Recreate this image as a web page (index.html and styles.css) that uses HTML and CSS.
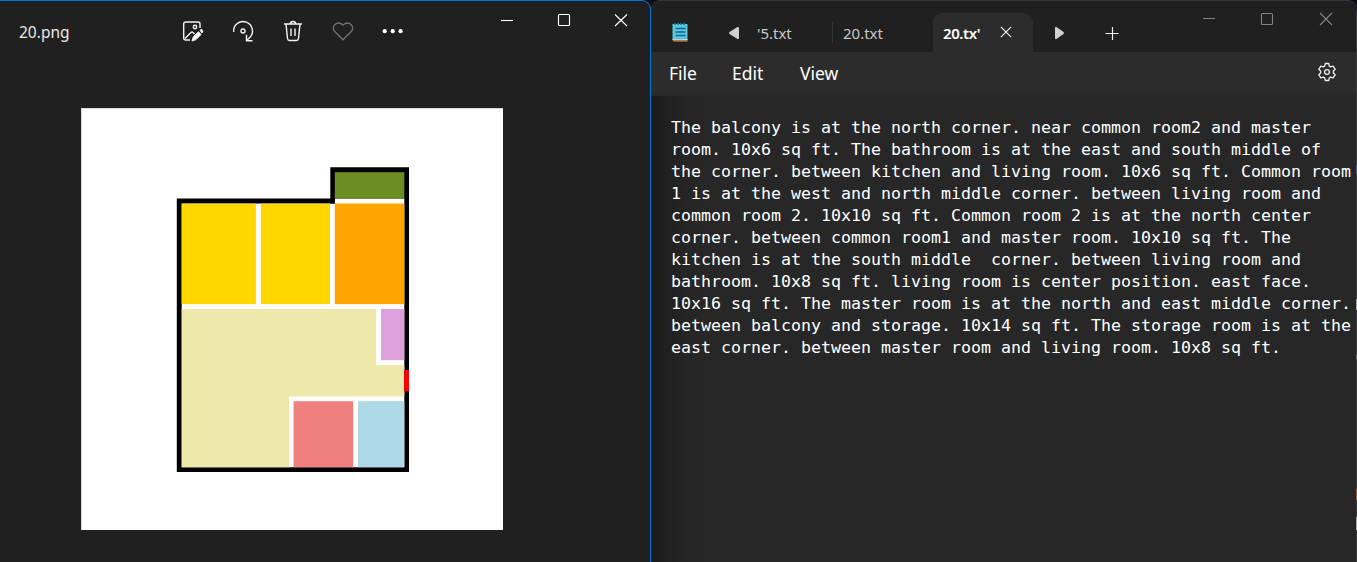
FILE: index.html
```html
<!DOCTYPE html>
<html lang="en">
<head>
<meta charset="utf-8">
<title>20.png</title>
<link rel="stylesheet" href="styles.css">
</head>
<body>
<main class="desktop">
  <section class="viewer">
    <header class="viewer-bar">
      <span class="file-name">20.png</span>
      <svg class="tools" width="220" height="26" viewBox="0 0 220 26" fill="none" stroke="#f4f4f4" stroke-width="1.4">
        <g>
          <path d="M10 22H5.5A2 2 0 0 1 3.700 20V6A2 2 0 0 1 5.700 4H18A2 2 0 0 1 20 6V10"/>
          <circle cx="15" cy="9" r="1.700"/>
          <path d="M5 20.500L11 14.500Q12 13.500 13 14.500L14.500 16"/>
          <path d="M12 23L13.300 18.800L18.500 13.800L21 16.500L16 21.600Z M20 12.200L21.700 11.300L22.800 13.200L22 15Z" fill="#fff" stroke-width="1"/>
        </g>
        <g>
          <path d="M53.700 14A9.400 9.400 0 1 1 69.500 19.800L66.800 22.300M66.500 16.800V22.800H72.500"/>
          <circle cx="63" cy="13" r="2"/>
        </g>
        <g>
          <path d="M104 6H122M110.300 5.700Q110.500 3.500 113 3.500T115.700 5.700M106 6L107.500 20.500Q107.800 22.500 109.500 22.500H116.500Q118.200 22.500 118.500 20.500L120 6M111 10.500V18M115 10.500V18"/>
        </g>
        <path stroke="#717171" d="M163 21.800L154.700 13.600C150.800 9 156.500 1.500 163 7C169.500 1.500 175.200 9 171.300 13.600Z"/>
        <g fill="#fff" stroke="none"><circle cx="204.700" cy="13.200" r="2.100"/><circle cx="212.700" cy="13.200" r="2.100"/><circle cx="220.600" cy="13.200" r="2.100"/></g>
      </svg>
      <svg class="caption-buttons" width="130" height="16" viewBox="0 0 130 16" fill="none" stroke="#fff" stroke-width="1.100">
        <path d="M1 8.500H13"/><rect x="58.500" y="2.500" width="11" height="11" rx="1"/><path d="M115 2.500L127 14M127 2.500L115 14"/>
      </svg>
    </header>
    <div class="canvas">
      <svg class="plan" width="422" height="422" viewBox="81 108 422 422">
        <rect x="81" y="108" width="422" height="422" fill="#fff"/>
        <path d="M81.500 530V108.500H503" fill="none" stroke="#d9d9d9"/>
        <path d="M176.800 198.500H330.300V167.300H409V472H176.800Z" fill="#000"/>
        <path d="M181.700 203.600H334.800V198.500H404.300V467.200H181.700Z" fill="#fff"/>
        <rect x="334.800" y="172.200" width="69.500" height="26.500" fill="#6b8e23"/>
        <path d="M330.300 198.500H334.800V203.600H330.300Z" fill="#000"/>
        <rect x="181.700" y="203.700" width="74.200" height="100.400" fill="#ffd700"/>
        <rect x="260.800" y="203.700" width="69.200" height="100.400" fill="#ffd700"/>
        <rect x="334.800" y="203.500" width="69.500" height="100.600" fill="#ffa500"/>
        <path d="M181.700 309H376V365H404.300V396.400H289V467.200H181.700Z" fill="#eee8aa"/>
        <rect x="381" y="309" width="23.300" height="51.200" fill="#dda0dd"/>
        <rect x="293.600" y="401.200" width="59.600" height="66" fill="#f08080"/>
        <rect x="358" y="401.200" width="46.300" height="66" fill="#add8e6"/>
        <rect x="404" y="370" width="5" height="21.400" fill="#f00"/>
      </svg>
    </div>
  </section>
  <section class="notepad">
    <header class="tab-bar">
      <svg class="app-icon" width="16" height="21" viewBox="0 0 16 21">
        <path d="M1 17H15.500V20H2L1 19Z" fill="#9c531c"/><path d="M.5 17H15.500V18.300H.5Z" fill="#eee"/>
        <path d="M.5 2H15.500V17.500H.5Z" fill="#5fc3df"/>
        <path d="M3 .8V3M6 .8V3M9 .8V3M12 .8V3" stroke="#087ca0" stroke-width="1.500"/>
        <path d="M3.500 6.500H13.500M3.500 10H13.500M3.500 13.500H13.500" stroke="#086d8e" stroke-width="1.500"/>
      </svg>
      <svg class="scroll-left" width="12" height="14" viewBox="0 0 12 14"><path d="M11 2Q11 .5 9.500 1L1.500 6Q.5 7 1.500 8L9.500 13Q11 13.500 11 12Z" fill="#cfcfcf"/></svg>
      <span class="tab-label first-label">'5.txt</span>
      <span class="tab-label second-label">20.txt</span>
      <div class="active-tab"><span class="active-label">20.tx'</span>
        <svg width="12" height="12" viewBox="0 0 12 12" stroke="#eee" stroke-width="1.200"><path d="M.8.8L11.200 11.200M11.200.8L.8 11.200"/></svg>
      </div>
      <svg class="scroll-right" width="12" height="14" viewBox="0 0 12 14"><path d="M1 2Q1 .5 2.500 1L9.500 6Q10.500 7 9.500 8L2.500 13Q1 13.500 1 12Z" fill="#cfcfcf"/></svg>
      <svg class="new-tab" width="14" height="14" viewBox="0 0 14 14" stroke="#eee" stroke-width="1.200"><path d="M.5 7.500H13.500M7.500 1V14"/></svg>
      <svg class="window-buttons" width="134" height="16" viewBox="0 0 134 16" fill="none" stroke="#858585" stroke-width="1.100">
        <path d="M1 7.500H13"/><rect x="59.500" y="2.500" width="11" height="11" rx="1"/><path d="M118 2L130 14M130 2L118 14"/>
      </svg>
    </header>
    <nav class="menu">
      <span class="menu-file">File</span><span class="menu-edit">Edit</span><span class="menu-view">View</span>
      <svg class="gear" width="20" height="20" viewBox="0 0 20 20" fill="none" stroke="#eee" stroke-width="1.300" stroke-linejoin="round">
        <path d="M8.300 1.500H11.700L12.300 4.100L13.700 4.900L16.200 4.100L18.200 7.300L16.200 9.200V10.800L18.200 12.700L16.200 15.900L13.700 15.100L12.300 15.900L11.700 18.500H8.300L7.700 15.900L6.300 15.100L3.800 15.900L1.800 12.700L3.800 10.800V9.200L1.800 7.300L3.800 4.100L6.300 4.900L7.700 4.100Z"/>
        <circle cx="10" cy="10" r="2.400"/>
      </svg>
    </nav>
    <pre class="document">The balcony is at the north corner. near common room2 and master
room. 10x6 sq ft. The bathroom is at the east and south middle of
the corner. between kitchen and living room. 10x6 sq ft. Common room
1 is at the west and north middle corner. between living room and
common room 2. 10x10 sq ft. Common room 2 is at the north center
corner. between common room1 and master room. 10x10 sq ft. The
kitchen is at the south middle  corner. between living room and
bathroom. 10x8 sq ft. living room is center position. east face.
10x16 sq ft. The master room is at the north and east middle corner.
between balcony and storage. 10x14 sq ft. The storage room is at the
east corner. between master room and living room. 10x8 sq ft.</pre>
    <div class="edge"></div>
  </section>
</main>
</body>
</html>
```
FILE: styles.css
```css
* { box-sizing: border-box; }
body { margin: 0; font-family: "Noto Sans", sans-serif; background: #0c0e14; }
svg { display: block; flex: none; }
.desktop { display: flex; width: 1357px; height: 562px; overflow: hidden; }
.viewer { width: 651px; height: 562px; background: #202020; border-top: 1px solid #0078d7; border-right: 1px solid #0078d7; border-top-right-radius: 9px; }
.viewer-bar { display: flex; align-items: flex-start; height: 107px; }
.file-name { width: 161px; margin: 20px 0 0 19px; font-size: 15.5px; line-height: 22px; color: #e8e8e8; }
.tools { margin-top: 17px; overflow: visible; }
.caption-buttons { margin: 11px 0 0 100px; }
.canvas { padding-left: 81px; }
.notepad { position: relative; width: 706px; height: 562px; border-top: 1px solid #35373c; border-radius: 9px 9px 0 0; overflow: hidden; background: linear-gradient(90deg, #1a1a1a 0, #202020 14px, #252525 34px, #272727 55px); }
.tab-bar { display: flex; height: 51px; background: #202020; color: #c8c8c8; font-size: 15px; line-height: 22px; }
.app-icon { margin: 21px 0 0 21px; }
.scroll-left { margin: 25px 0 0 40px; }
.tab-label { margin-top: 21px; white-space: nowrap; }
.first-label { width: 75px; margin-left: 17px; }
.second-label { width: 101px; height: 21px; padding-left: 10px; border-left: 1px solid #353535; }
.active-tab { display: flex; width: 100px; height: 39px; margin-top: 12px; padding: 9px 0 0 10px; background: #2c2c2c; border-radius: 9px 9px 0 0; color: #fff; }
.active-label { width: 39px; font-weight: 600; white-space: nowrap; letter-spacing: -.4px; }
.active-tab svg { margin: 4px 0 0 18px; }
.scroll-right { margin: 25px 0 0 21px; }
.new-tab { margin: 25px 0 0 39px; }
.window-buttons { margin: 10px 0 0 83px; }
.menu { display: flex; height: 44px; padding: 9px 0 0 18px; background: #2c2c2c; border-bottom: 3px solid #292929; color: #fff; font-size: 17.5px; line-height: 24px; }
.menu-file { width: 63px; }
.menu-edit { width: 68px; }
.menu-view { width: 517px; }
.gear { margin-top: 1px; }
.document { margin: 21px 0 0 20px; font: 16.61px/22px "DejaVu Sans Mono", monospace; color: #fff; }
/* Sliver of the window behind, along the right border */
.edge { position: absolute; top: 10px; right: 0; bottom: 0; width: 1px; background: linear-gradient(#3b3b3b 0 154px, #4c5f8c 154px 163px, #3b3b3b 163px 288px, #a5a5a5 288px 299px, #3b3b3b 299px 344px, #777 344px 348px, #3b3b3b 348px 478px, #a35f38 478px 489px, #3b3b3b 489px 506px, #aaa 506px 519px, #3b3b3b 519px); }
```
